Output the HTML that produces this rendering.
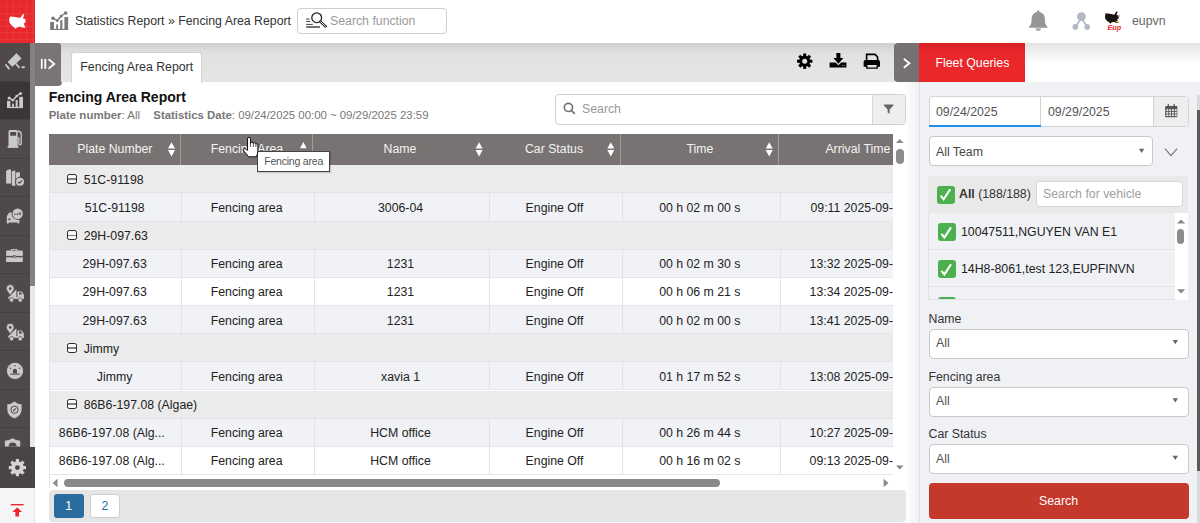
<!DOCTYPE html>
<html><head><meta charset="utf-8"><style>
*{box-sizing:border-box}
html,body{margin:0;padding:0;width:1200px;height:523px;overflow:hidden;background:#fff;font-family:"Liberation Sans",sans-serif;color:#333}
.a{position:absolute}
.t{position:absolute;white-space:nowrap}
#top{left:0;top:0;width:1200px;height:43px;background:#fff}
#logo{left:0;top:0;width:35px;height:43px;background:#e8282c}
#side{left:0;top:43px;width:35px;height:480px;background:#4f4a49}
.si{position:absolute;left:0;width:30px;border-bottom:1px solid #464140}
#collapse{left:35px;top:43px;width:26.5px;height:43.4px;background:#7a7574;border-radius:0 4px 4px 0}
#tabbar{left:61px;top:43px;width:834px;height:38.6px;background:linear-gradient(#cecece 0,#dcdcdc 7px,#e2e2e2 13px,#e5e5e5 100%)}
#tab{left:70.5px;top:51.5px;width:131px;height:31px;background:#fff;border:1px solid #d2d2d2;border-bottom:none;border-radius:3px 3px 0 0}
#rtog{left:894px;top:43px;width:25.3px;height:38.7px;background:#757170;border-radius:4px 0 0 4px}
#fq{left:919.3px;top:43px;width:105.7px;height:38.7px;background:linear-gradient(#d92227,#ea282b 35%)}
#rp{left:918.5px;top:81.7px;width:281.5px;height:441.3px;background:#f0f1f5;border-left:1px solid #dfe0e5}
#rpshadow{left:904px;top:81.7px;width:14.5px;height:441.3px;background:linear-gradient(90deg,rgba(0,0,30,0),rgba(0,0,30,.06))}
#topsh{left:1025px;top:43px;width:175px;height:20px;background:linear-gradient(#e3e3e3,rgba(255,255,255,0))}
.th{position:absolute;top:134px;height:31.3px;background:#787372}
.cell{position:absolute;height:28.15px;border-right:1px solid #e3e3e3;border-bottom:1px solid #e6e6e6}
.sel{position:absolute;left:928.5px;width:260px;height:30px;background:#fff;border:1px solid #c9c9c9;border-radius:4px}
</style></head><body>
<div class="a" id="top"></div>
<div class="a" id="topsh"></div>
<div class="a" id="logo"></div>
<div class="a" id="side"></div>
<div class="si" style="top:43.00px;height:38.5px;background:#4f4a49"></div>
<div class="si" style="top:81.50px;height:38.5px;background:#3b3635"></div>
<div class="si" style="top:120.00px;height:38.5px;background:#4f4a49"></div>
<div class="si" style="top:158.50px;height:38.5px;background:#4f4a49"></div>
<div class="si" style="top:197.00px;height:38.5px;background:#4f4a49"></div>
<div class="si" style="top:235.50px;height:38.5px;background:#4f4a49"></div>
<div class="si" style="top:274.00px;height:38.5px;background:#4f4a49"></div>
<div class="si" style="top:312.50px;height:38.5px;background:#4f4a49"></div>
<div class="si" style="top:351.00px;height:38.5px;background:#4f4a49"></div>
<div class="si" style="top:389.50px;height:38.5px;background:#4f4a49"></div>
<div class="si" style="top:428.00px;height:38.5px;background:#4f4a49"></div>
<div class="a" style="left:30px;top:43px;width:5px;height:404px;background:#e9e9e9"></div>
<div class="a" style="left:30px;top:43px;width:5px;height:242.5px;background:#858282"></div>
<div class="a" style="left:0;top:446.5px;width:35px;height:41.5px;background:#4a4544"></div>
<div class="a" style="left:0;top:488px;width:35px;height:35px;background:#f5f5f5;border-right:1px solid #e6e6e6"></div>
<div class="a" id="collapse"></div>
<div class="a" id="tabbar"></div>
<div class="a" id="tab"></div>
<div class="t" style="left:80.30px;top:59.97px;font-size:12.3px;line-height:14.145px;color:#333;font-weight:normal;">Fencing Area Report</div>
<div class="a" id="rpshadow"></div>
<div class="a" id="rp"></div>
<div class="a" id="rtog"></div>
<div class="a" id="fq"></div>
<div class="t" style="left:935.50px;top:56.07px;font-size:12.3px;line-height:14.145px;color:#fff;font-weight:normal;">Fleet Queries</div>
<div class="t" style="left:75.00px;top:13.97px;font-size:12.3px;line-height:14.145px;color:#333;font-weight:normal;">Statistics Report &raquo; Fencing Area Report</div>
<div class="a" style="left:297px;top:8px;width:150px;height:26px;border:1px solid #cfcfcf;border-radius:4px"></div>
<div class="t" style="left:330.00px;top:14.17px;font-size:12.3px;line-height:14.145px;color:#9a9a9a;font-weight:normal;">Search function</div>
<div class="t" style="left:1132.00px;top:14.47px;font-size:12.3px;line-height:14.145px;color:#666;font-weight:normal;">eupvn</div>
<div class="t" style="left:48.70px;top:88.50px;font-size:14.0px;line-height:16.1px;color:#111;font-weight:bold;">Fencing Area Report</div>
<div class="t" style="left:48.70px;top:108.60px;font-size:11.5px;line-height:13.225px;color:#777;font-weight:normal;"><b>Plate number</b>: All</div>
<div class="t" style="left:153.30px;top:108.69px;font-size:11.4px;line-height:13.11px;color:#777;font-weight:normal;"><b>Statistics Date</b>: 09/24/2025 00:00 ~ 09/29/2025 23:59</div>
<div class="a" style="left:555px;top:93.5px;width:351px;height:31px;border:1px solid #cfcfcf;border-radius:4px;background:#fff"></div>
<div class="a" style="left:871.5px;top:94.5px;width:33.5px;height:29px;background:#eeeeee;border-left:1px solid #d6d6d6;border-radius:0 3px 3px 0"></div>
<div class="t" style="left:582.00px;top:102.17px;font-size:12.3px;line-height:14.145px;color:#999;font-weight:normal;">Search</div>
<div class="a" style="left:48.6px;top:134px;width:844.4px;height:341px;overflow:hidden">
<div class="th" style="left:0.00px;width:132.00px;top:0"></div>
<div class="a" style="left:131.50px;width:1px;top:0;height:31.3px;background:#a19c9a"></div>
<div class="th" style="left:132.00px;width:132.10px;top:0"></div>
<div class="a" style="left:263.60px;width:1px;top:0;height:31.3px;background:#a19c9a"></div>
<div class="th" style="left:264.10px;width:175.70px;top:0"></div>
<div class="a" style="left:439.30px;width:1px;top:0;height:31.3px;background:#a19c9a"></div>
<div class="th" style="left:439.80px;width:132.30px;top:0"></div>
<div class="a" style="left:571.60px;width:1px;top:0;height:31.3px;background:#a19c9a"></div>
<div class="th" style="left:572.10px;width:158.30px;top:0"></div>
<div class="a" style="left:729.90px;width:1px;top:0;height:31.3px;background:#a19c9a"></div>
<div class="th" style="left:730.40px;width:161.00px;top:0"></div>
<div class="a" style="left:890.90px;width:1px;top:0;height:31.3px;background:#a19c9a"></div>
<div class="a" style="left:0;top:31.30px;width:900px;height:28.15px;background:#ebebeb;border-bottom:1px solid #e3e3e3"></div>
<div class="cell" style="left:0.00px;top:59.45px;width:133.90px;background:#f1f2f6"></div>
<div class="cell" style="left:133.90px;top:59.45px;width:132.10px;background:#f1f2f6"></div>
<div class="cell" style="left:266.00px;top:59.45px;width:175.70px;background:#f1f2f6"></div>
<div class="cell" style="left:441.70px;top:59.45px;width:132.30px;background:#f1f2f6"></div>
<div class="cell" style="left:574.00px;top:59.45px;width:158.30px;background:#f1f2f6"></div>
<div class="cell" style="left:732.30px;top:59.45px;width:161.00px;background:#f1f2f6"></div>
<div class="a" style="left:0;top:87.60px;width:900px;height:28.15px;background:#ebebeb;border-bottom:1px solid #e3e3e3"></div>
<div class="cell" style="left:0.00px;top:115.75px;width:133.90px;background:#f1f2f6"></div>
<div class="cell" style="left:133.90px;top:115.75px;width:132.10px;background:#f1f2f6"></div>
<div class="cell" style="left:266.00px;top:115.75px;width:175.70px;background:#f1f2f6"></div>
<div class="cell" style="left:441.70px;top:115.75px;width:132.30px;background:#f1f2f6"></div>
<div class="cell" style="left:574.00px;top:115.75px;width:158.30px;background:#f1f2f6"></div>
<div class="cell" style="left:732.30px;top:115.75px;width:161.00px;background:#f1f2f6"></div>
<div class="cell" style="left:0.00px;top:143.90px;width:133.90px;background:#ffffff"></div>
<div class="cell" style="left:133.90px;top:143.90px;width:132.10px;background:#ffffff"></div>
<div class="cell" style="left:266.00px;top:143.90px;width:175.70px;background:#ffffff"></div>
<div class="cell" style="left:441.70px;top:143.90px;width:132.30px;background:#ffffff"></div>
<div class="cell" style="left:574.00px;top:143.90px;width:158.30px;background:#ffffff"></div>
<div class="cell" style="left:732.30px;top:143.90px;width:161.00px;background:#ffffff"></div>
<div class="cell" style="left:0.00px;top:172.05px;width:133.90px;background:#f1f2f6"></div>
<div class="cell" style="left:133.90px;top:172.05px;width:132.10px;background:#f1f2f6"></div>
<div class="cell" style="left:266.00px;top:172.05px;width:175.70px;background:#f1f2f6"></div>
<div class="cell" style="left:441.70px;top:172.05px;width:132.30px;background:#f1f2f6"></div>
<div class="cell" style="left:574.00px;top:172.05px;width:158.30px;background:#f1f2f6"></div>
<div class="cell" style="left:732.30px;top:172.05px;width:161.00px;background:#f1f2f6"></div>
<div class="a" style="left:0;top:200.20px;width:900px;height:28.15px;background:#ebebeb;border-bottom:1px solid #e3e3e3"></div>
<div class="cell" style="left:0.00px;top:228.35px;width:133.90px;background:#f1f2f6"></div>
<div class="cell" style="left:133.90px;top:228.35px;width:132.10px;background:#f1f2f6"></div>
<div class="cell" style="left:266.00px;top:228.35px;width:175.70px;background:#f1f2f6"></div>
<div class="cell" style="left:441.70px;top:228.35px;width:132.30px;background:#f1f2f6"></div>
<div class="cell" style="left:574.00px;top:228.35px;width:158.30px;background:#f1f2f6"></div>
<div class="cell" style="left:732.30px;top:228.35px;width:161.00px;background:#f1f2f6"></div>
<div class="a" style="left:0;top:256.50px;width:900px;height:28.15px;background:#ebebeb;border-bottom:1px solid #e3e3e3"></div>
<div class="cell" style="left:0.00px;top:284.65px;width:133.90px;background:#f1f2f6"></div>
<div class="cell" style="left:133.90px;top:284.65px;width:132.10px;background:#f1f2f6"></div>
<div class="cell" style="left:266.00px;top:284.65px;width:175.70px;background:#f1f2f6"></div>
<div class="cell" style="left:441.70px;top:284.65px;width:132.30px;background:#f1f2f6"></div>
<div class="cell" style="left:574.00px;top:284.65px;width:158.30px;background:#f1f2f6"></div>
<div class="cell" style="left:732.30px;top:284.65px;width:161.00px;background:#f1f2f6"></div>
<div class="cell" style="left:0.00px;top:312.80px;width:133.90px;background:#ffffff"></div>
<div class="cell" style="left:133.90px;top:312.80px;width:132.10px;background:#ffffff"></div>
<div class="cell" style="left:266.00px;top:312.80px;width:175.70px;background:#ffffff"></div>
<div class="cell" style="left:441.70px;top:312.80px;width:132.30px;background:#ffffff"></div>
<div class="cell" style="left:574.00px;top:312.80px;width:158.30px;background:#ffffff"></div>
<div class="cell" style="left:732.30px;top:312.80px;width:161.00px;background:#ffffff"></div>
</div>
<div class="t" style="left:83.70px;top:172.67px;font-size:12.3px;line-height:14.145px;color:#222;font-weight:normal;">51C-91198</div>
<div class="a" style="left:67px;top:173.75px;width:10.25px;height:10.25px;border:1.2px solid #2a2a2a;border-radius:2.2px;background:#f7f7f7"></div>
<div class="a" style="left:68.2px;top:178.25px;width:7.85px;height:1.8px;background:#808080"></div>
<div class="t" style="left:48.60px;width:132.0px;text-align:center;top:200.92px;font-size:12.3px;line-height:14.145px;color:#222;font-weight:normal;">51C-91198</div>
<div class="t" style="left:180.60px;width:132.1px;text-align:center;top:200.92px;font-size:12.3px;line-height:14.145px;color:#222;font-weight:normal;">Fencing area</div>
<div class="t" style="left:312.70px;width:175.7px;text-align:center;top:200.92px;font-size:12.3px;line-height:14.145px;color:#222;font-weight:normal;">3006-04</div>
<div class="t" style="left:488.40px;width:132.30000000000007px;text-align:center;top:200.92px;font-size:12.3px;line-height:14.145px;color:#222;font-weight:normal;">Engine Off</div>
<div class="t" style="left:620.70px;width:158.29999999999995px;text-align:center;top:200.92px;font-size:12.3px;line-height:14.145px;color:#222;font-weight:normal;">00 h 02 m 00 s</div>
<div class="t" style="left:779px;width:114px;overflow:hidden;top:200.92px;font-size:12.3px;line-height:14.145px;color:#222;text-align:right">09:11 2025-09-</div>
<div class="t" style="left:83.70px;top:228.97px;font-size:12.3px;line-height:14.145px;color:#222;font-weight:normal;">29H-097.63</div>
<div class="a" style="left:67px;top:230.05px;width:10.25px;height:10.25px;border:1.2px solid #2a2a2a;border-radius:2.2px;background:#f7f7f7"></div>
<div class="a" style="left:68.2px;top:234.55px;width:7.85px;height:1.8px;background:#808080"></div>
<div class="t" style="left:48.60px;width:132.0px;text-align:center;top:257.22px;font-size:12.3px;line-height:14.145px;color:#222;font-weight:normal;">29H-097.63</div>
<div class="t" style="left:180.60px;width:132.1px;text-align:center;top:257.22px;font-size:12.3px;line-height:14.145px;color:#222;font-weight:normal;">Fencing area</div>
<div class="t" style="left:312.70px;width:175.7px;text-align:center;top:257.22px;font-size:12.3px;line-height:14.145px;color:#222;font-weight:normal;">1231</div>
<div class="t" style="left:488.40px;width:132.30000000000007px;text-align:center;top:257.22px;font-size:12.3px;line-height:14.145px;color:#222;font-weight:normal;">Engine Off</div>
<div class="t" style="left:620.70px;width:158.29999999999995px;text-align:center;top:257.22px;font-size:12.3px;line-height:14.145px;color:#222;font-weight:normal;">00 h 02 m 30 s</div>
<div class="t" style="left:779px;width:114px;overflow:hidden;top:257.22px;font-size:12.3px;line-height:14.145px;color:#222;text-align:right">13:32 2025-09-</div>
<div class="t" style="left:48.60px;width:132.0px;text-align:center;top:285.37px;font-size:12.3px;line-height:14.145px;color:#222;font-weight:normal;">29H-097.63</div>
<div class="t" style="left:180.60px;width:132.1px;text-align:center;top:285.37px;font-size:12.3px;line-height:14.145px;color:#222;font-weight:normal;">Fencing area</div>
<div class="t" style="left:312.70px;width:175.7px;text-align:center;top:285.37px;font-size:12.3px;line-height:14.145px;color:#222;font-weight:normal;">1231</div>
<div class="t" style="left:488.40px;width:132.30000000000007px;text-align:center;top:285.37px;font-size:12.3px;line-height:14.145px;color:#222;font-weight:normal;">Engine Off</div>
<div class="t" style="left:620.70px;width:158.29999999999995px;text-align:center;top:285.37px;font-size:12.3px;line-height:14.145px;color:#222;font-weight:normal;">00 h 06 m 21 s</div>
<div class="t" style="left:779px;width:114px;overflow:hidden;top:285.37px;font-size:12.3px;line-height:14.145px;color:#222;text-align:right">13:34 2025-09-</div>
<div class="t" style="left:48.60px;width:132.0px;text-align:center;top:313.52px;font-size:12.3px;line-height:14.145px;color:#222;font-weight:normal;">29H-097.63</div>
<div class="t" style="left:180.60px;width:132.1px;text-align:center;top:313.52px;font-size:12.3px;line-height:14.145px;color:#222;font-weight:normal;">Fencing area</div>
<div class="t" style="left:312.70px;width:175.7px;text-align:center;top:313.52px;font-size:12.3px;line-height:14.145px;color:#222;font-weight:normal;">1231</div>
<div class="t" style="left:488.40px;width:132.30000000000007px;text-align:center;top:313.52px;font-size:12.3px;line-height:14.145px;color:#222;font-weight:normal;">Engine Off</div>
<div class="t" style="left:620.70px;width:158.29999999999995px;text-align:center;top:313.52px;font-size:12.3px;line-height:14.145px;color:#222;font-weight:normal;">00 h 02 m 00 s</div>
<div class="t" style="left:779px;width:114px;overflow:hidden;top:313.52px;font-size:12.3px;line-height:14.145px;color:#222;text-align:right">13:41 2025-09-</div>
<div class="t" style="left:83.70px;top:341.57px;font-size:12.3px;line-height:14.145px;color:#222;font-weight:normal;">Jimmy</div>
<div class="a" style="left:67px;top:342.65px;width:10.25px;height:10.25px;border:1.2px solid #2a2a2a;border-radius:2.2px;background:#f7f7f7"></div>
<div class="a" style="left:68.2px;top:347.15px;width:7.85px;height:1.8px;background:#808080"></div>
<div class="t" style="left:48.60px;width:132.0px;text-align:center;top:369.82px;font-size:12.3px;line-height:14.145px;color:#222;font-weight:normal;">Jimmy</div>
<div class="t" style="left:180.60px;width:132.1px;text-align:center;top:369.82px;font-size:12.3px;line-height:14.145px;color:#222;font-weight:normal;">Fencing area</div>
<div class="t" style="left:312.70px;width:175.7px;text-align:center;top:369.82px;font-size:12.3px;line-height:14.145px;color:#222;font-weight:normal;">xavia 1</div>
<div class="t" style="left:488.40px;width:132.30000000000007px;text-align:center;top:369.82px;font-size:12.3px;line-height:14.145px;color:#222;font-weight:normal;">Engine Off</div>
<div class="t" style="left:620.70px;width:158.29999999999995px;text-align:center;top:369.82px;font-size:12.3px;line-height:14.145px;color:#222;font-weight:normal;">01 h 17 m 52 s</div>
<div class="t" style="left:779px;width:114px;overflow:hidden;top:369.82px;font-size:12.3px;line-height:14.145px;color:#222;text-align:right">13:08 2025-09-</div>
<div class="t" style="left:83.70px;top:397.87px;font-size:12.3px;line-height:14.145px;color:#222;font-weight:normal;">86B6-197.08 (Algae)</div>
<div class="a" style="left:67px;top:398.95px;width:10.25px;height:10.25px;border:1.2px solid #2a2a2a;border-radius:2.2px;background:#f7f7f7"></div>
<div class="a" style="left:68.2px;top:403.45px;width:7.85px;height:1.8px;background:#808080"></div>
<div class="t" style="left:58.80px;top:426.12px;font-size:12.3px;line-height:14.145px;color:#222;font-weight:normal;">86B6-197.08 (Alg...</div>
<div class="t" style="left:180.60px;width:132.1px;text-align:center;top:426.12px;font-size:12.3px;line-height:14.145px;color:#222;font-weight:normal;">Fencing area</div>
<div class="t" style="left:312.70px;width:175.7px;text-align:center;top:426.12px;font-size:12.3px;line-height:14.145px;color:#222;font-weight:normal;">HCM office</div>
<div class="t" style="left:488.40px;width:132.30000000000007px;text-align:center;top:426.12px;font-size:12.3px;line-height:14.145px;color:#222;font-weight:normal;">Engine Off</div>
<div class="t" style="left:620.70px;width:158.29999999999995px;text-align:center;top:426.12px;font-size:12.3px;line-height:14.145px;color:#222;font-weight:normal;">00 h 26 m 44 s</div>
<div class="t" style="left:779px;width:114px;overflow:hidden;top:426.12px;font-size:12.3px;line-height:14.145px;color:#222;text-align:right">10:27 2025-09-</div>
<div class="t" style="left:58.80px;top:454.27px;font-size:12.3px;line-height:14.145px;color:#222;font-weight:normal;">86B6-197.08 (Alg...</div>
<div class="t" style="left:180.60px;width:132.1px;text-align:center;top:454.27px;font-size:12.3px;line-height:14.145px;color:#222;font-weight:normal;">Fencing area</div>
<div class="t" style="left:312.70px;width:175.7px;text-align:center;top:454.27px;font-size:12.3px;line-height:14.145px;color:#222;font-weight:normal;">HCM office</div>
<div class="t" style="left:488.40px;width:132.30000000000007px;text-align:center;top:454.27px;font-size:12.3px;line-height:14.145px;color:#222;font-weight:normal;">Engine Off</div>
<div class="t" style="left:620.70px;width:158.29999999999995px;text-align:center;top:454.27px;font-size:12.3px;line-height:14.145px;color:#222;font-weight:normal;">00 h 16 m 02 s</div>
<div class="t" style="left:779px;width:114px;overflow:hidden;top:454.27px;font-size:12.3px;line-height:14.145px;color:#222;text-align:right">09:13 2025-09-</div>
<div class="t" style="left:48.85px;width:132.0px;text-align:center;top:142.17px;font-size:12.3px;line-height:14.145px;color:#f4f4f4;font-weight:normal;">Plate Number</div>
<div class="t" style="left:180.95px;width:132.1px;text-align:center;top:142.17px;font-size:12.3px;line-height:14.145px;color:#f4f4f4;font-weight:normal;">Fencing Area</div>
<div class="t" style="left:312.15px;width:175.7px;text-align:center;top:142.17px;font-size:12.3px;line-height:14.145px;color:#f4f4f4;font-weight:normal;">Name</div>
<div class="t" style="left:487.85px;width:132.30000000000007px;text-align:center;top:142.17px;font-size:12.3px;line-height:14.145px;color:#f4f4f4;font-weight:normal;">Car Status</div>
<div class="t" style="left:620.85px;width:158.29999999999995px;text-align:center;top:142.17px;font-size:12.3px;line-height:14.145px;color:#f4f4f4;font-weight:normal;">Time</div>
<div class="t" style="left:779px;width:111.3px;overflow:hidden;top:142.17px;font-size:12.3px;line-height:14.145px;color:#f4f4f4;text-align:right">Arrival Time</div>
<div class="a" style="left:893px;top:134px;width:14px;height:341px;background:#fff"></div>
<div class="a" style="left:895.5px;top:149px;width:8px;height:15px;background:#8c8c8c;border-radius:4px"></div>
<div class="a" style="left:48.6px;top:475px;width:858px;height:13.5px;background:#fff"></div>
<div class="a" style="left:63.8px;top:479px;width:656px;height:8px;background:#8a8a8a;border-radius:4px"></div>
<div class="a" style="left:48.6px;top:165.3px;width:1px;height:323px;background:#e4e4e4"></div>
<div class="a" style="left:48.8px;top:490px;width:857.6px;height:32px;background:#e5e5e5;border-radius:4px"></div>
<div class="a" style="left:53.5px;top:493.7px;width:30.2px;height:24.4px;background:#2a6c9e;border-radius:3px"></div>
<div class="a" style="left:89.5px;top:493.7px;width:30.7px;height:24.4px;background:#fff;border:1px solid #cfcfcf;border-radius:3px"></div>
<div class="t" style="left:53.60px;width:30px;text-align:center;top:498.67px;font-size:12.3px;line-height:14.145px;color:#fff;font-weight:normal;">1</div>
<div class="t" style="left:89.80px;width:30px;text-align:center;top:498.67px;font-size:12.3px;line-height:14.145px;color:#2a6c9e;font-weight:normal;">2</div>
<div class="a" style="left:928.5px;top:96.2px;width:260px;height:31px;border:1px solid #d3d3d3;border-radius:4px;background:#fff"></div>
<div class="a" style="left:1153px;top:97.2px;width:34.5px;height:29px;background:#eeeeee;border-left:1px solid #d3d3d3;border-radius:0 3px 3px 0"></div>
<div class="a" style="left:1040.4px;top:97.2px;width:1px;height:29px;background:#d3d3d3"></div>
<div class="a" style="left:929px;top:125px;width:111.5px;height:2.3px;background:#1e90e8"></div>
<div class="t" style="left:936.00px;top:104.67px;font-size:12.3px;line-height:14.145px;color:#555;font-weight:normal;">09/24/2025</div>
<div class="t" style="left:1048.00px;top:104.67px;font-size:12.3px;line-height:14.145px;color:#555;font-weight:normal;">09/29/2025</div>
<div class="sel" style="top:136px;width:224.7px"></div>
<div class="t" style="left:936.00px;top:144.67px;font-size:12.3px;line-height:14.145px;color:#444;font-weight:normal;">All Team</div>
<div class="a" style="left:928.4px;top:176px;width:260px;height:124.3px;background:#f0f1f5;border:1px solid #e3e3e3"></div>
<div class="a" style="left:928.4px;top:176px;width:260px;height:36.8px;background:#e9e9e9"></div>
<div class="a" style="left:1036.2px;top:181.2px;width:147.2px;height:25.8px;background:#fff;border:1px solid #d6d6d6;border-radius:4px"></div>
<div class="t" style="left:1043.00px;top:187.17px;font-size:12.3px;line-height:14.145px;color:#a0a0a0;font-weight:normal;">Search for vehicle</div>
<div class="a" style="left:937px;top:185.5px;width:18px;height:18px;background:#4cb050;border-radius:3px"></div>
<div class="t" style="left:959px;top:186px;font-size:12.3px;line-height:16px;color:#333"><b>All</b> (188/188)</div>
<div class="a" style="left:929.4px;top:212.8px;width:245.2px;height:86.5px;overflow:hidden">
<div class="a" style="left:0;top:0.00px;width:245.2px;height:36.9px;border-bottom:1px solid #e2e2e2"></div>
<div class="a" style="left:8.6px;top:10.70px;width:18px;height:18px;background:#4cb050;border-radius:3px"></div>
<div class="a" style="left:0;top:36.90px;width:245.2px;height:36.9px;border-bottom:1px solid #e2e2e2"></div>
<div class="a" style="left:8.6px;top:47.60px;width:18px;height:18px;background:#4cb050;border-radius:3px"></div>
<div class="a" style="left:0;top:73.60px;width:245.2px;height:36.9px;border-bottom:1px solid #e2e2e2"></div>
<div class="a" style="left:8.6px;top:84.30px;width:18px;height:18px;background:#4cb050;border-radius:3px"></div>
</div>
<div class="t" style="left:961.00px;top:224.97px;font-size:12.3px;line-height:14.145px;color:#222;font-weight:normal;">10047511,NGUYEN VAN E1</div>
<div class="t" style="left:961.00px;top:261.87px;font-size:12.3px;line-height:14.145px;color:#222;font-weight:normal;">14H8-8061,test 123,EUPFINVN</div>
<div class="a" style="left:1174.6px;top:213px;width:13.4px;height:86.5px;background:#fff"></div>
<div class="a" style="left:1176.5px;top:229.4px;width:7px;height:14.2px;background:#8c8c8c;border-radius:3.5px"></div>
<div class="t" style="left:928.50px;top:311.57px;font-size:12.3px;line-height:14.145px;color:#333;font-weight:normal;">Name</div>
<div class="sel" style="top:328.5px"></div>
<div class="t" style="left:936.00px;top:336.17px;font-size:12.3px;line-height:14.145px;color:#555;font-weight:normal;">All</div>
<div class="t" style="left:928.50px;top:369.77px;font-size:12.3px;line-height:14.145px;color:#333;font-weight:normal;">Fencing area</div>
<div class="sel" style="top:386.7px"></div>
<div class="t" style="left:936.00px;top:394.37px;font-size:12.3px;line-height:14.145px;color:#555;font-weight:normal;">All</div>
<div class="t" style="left:928.50px;top:427.27px;font-size:12.3px;line-height:14.145px;color:#333;font-weight:normal;">Car Status</div>
<div class="sel" style="top:444.2px"></div>
<div class="t" style="left:936.00px;top:451.87px;font-size:12.3px;line-height:14.145px;color:#555;font-weight:normal;">All</div>
<div class="a" style="left:928.5px;top:483.4px;width:260px;height:35.2px;background:#c4392b;border-radius:4px"></div>
<div class="t" style="left:958.50px;width:200px;text-align:center;top:494.17px;font-size:12.3px;line-height:14.145px;color:#fff;font-weight:normal;">Search</div>
<div class="a" style="left:1196.8px;top:95px;width:3.2px;height:428px;background:#dadada"></div>
<div class="a" style="left:1196.8px;top:109.8px;width:3.2px;height:361.5px;background:#5a5a5a"></div>
<div class="a" style="left:257px;top:150.75px;width:73.4px;height:20.85px;background:#fff;border:1px solid #444;box-shadow:1px 1px 1px rgba(0,0,0,.15)"></div>
<div class="t" style="left:264.20px;top:155.23px;font-size:10.6px;line-height:12.19px;color:#555;font-weight:normal;letter-spacing:-0.25px">Fencing area</div>
<svg class="a" style="left:0;top:0" width="1200" height="523" viewBox="0 0 1200 523"><path fill="#fff" d="M9.3,19 L10.1,16.4 L13,16.8 L16.5,17.3 L20.2,18.1 L22.4,14.8 L23.5,13.9 L24.3,14.5 L23,18.5 L25.2,19 L25.6,22.5 L23.8,23.5 L25.4,27.8 L22,27.6 L20,26.6 L17,27.5 L15.2,28.8 L14.4,27.4 L11.8,25.5 L9.4,22.6 Z"/>
<rect x="6.5" y="0" width="0.6" height="43" fill="#fff" opacity="0.12"/>
<rect x="13" y="0" width="0.6" height="43" fill="#fff" opacity="0.12"/>
<rect x="19.5" y="0" width="0.6" height="43" fill="#fff" opacity="0.12"/>
<rect x="26" y="0" width="0.6" height="43" fill="#fff" opacity="0.12"/>
<rect x="32.5" y="0" width="0.6" height="43" fill="#fff" opacity="0.12"/>
<rect x="0" y="6.5" width="35" height="0.6" fill="#fff" opacity="0.12"/>
<rect x="0" y="13" width="35" height="0.6" fill="#fff" opacity="0.12"/>
<rect x="0" y="19.5" width="35" height="0.6" fill="#fff" opacity="0.12"/>
<rect x="0" y="26" width="35" height="0.6" fill="#fff" opacity="0.12"/>
<rect x="0" y="32.5" width="35" height="0.6" fill="#fff" opacity="0.12"/>
<rect x="0" y="39" width="35" height="0.6" fill="#fff" opacity="0.12"/>
<path fill="#c9c9c9" d="M16.5,53.6 L21.1,58.4 L12.3,66.4 L8.05,62 Z" stroke="#c9c9c9" stroke-width="0.8" stroke-linejoin="round"/>
<line x1="6" y1="65" x2="9" y2="68.6" stroke="#c9c9c9" stroke-width="1.9" stroke-linecap="round"/>
<line x1="16.2" y1="64" x2="19" y2="67.4" stroke="#c9c9c9" stroke-width="1.7" stroke-linecap="round"/>
<rect x="21.5" y="66.3" width="3.4" height="1.9" rx="0.9" fill="#c9c9c9"/>
<g fill="#c9c9c9"><rect x="7" y="106.9" width="16" height="1.2"/><rect x="7" y="100.8" width="3.4" height="7"/><rect x="12" y="103.6" width="1.9" height="4"/><rect x="15.6" y="100" width="2.1" height="7"/><rect x="19.2" y="96.8" width="3.8" height="10.5"/></g>
<polyline points="9.1,97.9 12.9,100.2 16.7,96 20.5,93.5" fill="none" stroke="#3b3635" stroke-width="3.2" stroke-linejoin="round"/>
<polyline points="9.1,97.9 12.9,100.2 16.7,96 20.5,93.5" fill="none" stroke="#c9c9c9" stroke-width="1.4" stroke-linejoin="round"/>
<g fill="#c9c9c9"><circle cx="9.1" cy="97.9" r="1.5"/><circle cx="12.9" cy="100.2" r="1.3"/><circle cx="16.7" cy="96" r="1.3"/><circle cx="20.5" cy="93.5" r="1.6"/></g>
<path fill="#c9c9c9" d="M8.5,146.2 L8.5,131.5 Q8.5,130 10,130 L16.2,130 Q17.7,130 17.7,131.5 L17.7,146.2 Z M10.2,132 L10.2,135.7 L16.2,135.7 L16.2,132 Z" fill-rule="evenodd"/>
<rect x="7.7" y="145.9" width="10.7" height="2" fill="#c9c9c9"/>
<path fill="none" stroke="#c9c9c9" stroke-width="1.3" d="M17.7,131 Q21.2,131.5 21.2,134.5 L21.2,143.6 Q21.2,144.8 20,144.8 Q18.9,144.8 18.9,143.6 L18.9,138.2 L17.7,138.2"/>
<g fill="#c9c9c9"><path d="M6.1,171 Q7.5,169.3 10.6,169.3 L11.1,170.2 L11.1,183.4 L6.1,183.4 Z"/><path d="M11.8,183.8 L11.8,171.8 Q13,170.6 15,170.6 L15.4,171.5 L15.4,185.8 L12,185.8 Z"/><path d="M16,186.2 L16,173 Q17.2,171.9 19.4,171.9 L19.9,172.8 L19.9,177 L19,177.6 L16.2,186.2 Z"/></g>
<circle cx="20" cy="181.7" r="4.9" fill="#4f4a49"/><circle cx="20" cy="181.7" r="4" fill="#c9c9c9"/><polyline points="17.9,181.8 19.5,183.2 22.1,180.3" fill="none" stroke="#4f4a49" stroke-width="1.1"/>
<path fill="#c9c9c9" d="M6.8,223.6 L6.8,216.5 Q6.8,215.5 7.6,215 L9.2,212.6 L13,212.6 L15,216 L19.3,216.5 L19.3,223.6 L17.6,223.6 L17.6,222.4 L8.6,222.4 L8.6,223.6 Z"/>
<circle cx="9.4" cy="219.3" r="1.1" fill="#4f4a49"/>
<circle cx="17.6" cy="213.8" r="6.1" fill="#4f4a49"/><circle cx="17.6" cy="213.8" r="5.2" fill="#c9c9c9"/>
<g fill="#4f4a49"><rect x="14.2" y="213.7" width="1.4" height="1.2"/><rect x="16.8" y="213.1" width="1.3" height="2"/><rect x="19.2" y="212.3" width="1.5" height="2.8"/></g>
<path fill="#c9c9c9" d="M6.1,251.6 Q6.1,250.6 7.1,250.6 L11,250.6 L11,249.6 Q11,249 11.6,249 L16.9,249 Q17.5,249 17.5,249.6 L17.5,250.6 L21.8,250.6 Q22.8,250.6 22.8,251.6 L22.8,261.9 L6.1,261.9 Z"/>
<rect x="12" y="249.9" width="4.5" height="0.7" fill="#4f4a49"/>
<rect x="6.1" y="255.9" width="16.7" height="1.4" fill="#4f4a49"/>
<rect x="13.5" y="255.4" width="1.9" height="2.4" fill="#c9c9c9" stroke="#4f4a49" stroke-width="0.5"/>
<g transform="translate(0,0)">
<path fill="#c9c9c9" d="M8,297.8 L16.4,289.4 L16.4,297.8 Z"/>
<path fill="#c9c9c9" d="M17.4,299 L17.4,291.6 L21.6,291.6 L23.8,294.5 L23.8,299 Z"/>
<path fill="#4f4a49" d="M19,292.5 L21,292.5 L22.2,294.6 L19,294.6 Z"/>
<rect x="8.4" y="297.2" width="15.4" height="1.8" fill="#c9c9c9"/>
<circle cx="11.6" cy="299.9" r="2.2" fill="#c9c9c9" stroke="#4f4a49" stroke-width="0.7"/><circle cx="20.2" cy="299.9" r="2.2" fill="#c9c9c9" stroke="#4f4a49" stroke-width="0.7"/>
<path fill="#c9c9c9" stroke="#4f4a49" stroke-width="0.8" d="M10.2,295.3 L7.3,291.2 Q6.2,289.7 6.2,288.5 A3.9,3.9 0 0 1 14.2,288.5 Q14.2,289.7 13.1,291.2 Z"/>
<circle cx="10.2" cy="288.6" r="1.3" fill="#4f4a49"/>
</g>
<g transform="translate(0,38.8)">
<path fill="#c9c9c9" d="M8,297.8 L16.4,289.4 L16.4,297.8 Z"/>
<path fill="#c9c9c9" d="M17.4,299 L17.4,291.6 L21.6,291.6 L23.8,294.5 L23.8,299 Z"/>
<path fill="#4f4a49" d="M19,292.5 L21,292.5 L22.2,294.6 L19,294.6 Z"/>
<rect x="8.4" y="297.2" width="15.4" height="1.8" fill="#c9c9c9"/>
<circle cx="11.6" cy="299.9" r="2.2" fill="#c9c9c9" stroke="#4f4a49" stroke-width="0.7"/><circle cx="20.2" cy="299.9" r="2.2" fill="#c9c9c9" stroke="#4f4a49" stroke-width="0.7"/>
<path fill="#c9c9c9" stroke="#4f4a49" stroke-width="0.8" d="M10.2,295.3 L7.3,291.2 Q6.2,289.7 6.2,288.5 A3.9,3.9 0 0 1 14.2,288.5 Q14.2,289.7 13.1,291.2 Z"/>
<circle cx="10.2" cy="288.6" r="1.3" fill="#4f4a49"/>
</g>
<circle cx="15" cy="370.9" r="8.1" fill="#c9c9c9"/>
<path fill="#4f4a49" d="M12.9,373.6 L12.9,370.7 Q12.9,368.7 14.95,368.7 Q17,368.7 17,370.7 L17,373.6 Z"/>
<rect x="10.2" y="373.7" width="9.8" height="1" fill="#4f4a49"/>
<g fill="#4f4a49"><circle cx="10.4" cy="368.2" r="0.75"/><circle cx="19.5" cy="368.2" r="0.75"/><circle cx="14.95" cy="365.8" r="0.75"/></g>
<path fill="#c9c9c9" d="M14.4,401.5 Q17.5,404.2 21.6,404.3 L21.6,409.5 Q21.6,415.5 14.4,418.5 Q7.3,415.5 7.3,409.5 L7.3,404.3 Q11.3,404.2 14.4,401.5 Z"/>
<circle cx="14.5" cy="409.7" r="3.6" fill="none" stroke="#4f4a49" stroke-width="1"/>
<line x1="13.2" y1="411" x2="15.8" y2="408.4" stroke="#4f4a49" stroke-width="1.1"/>
<path fill="#c9c9c9" d="M12.6,438.3 Q16,440.6 20.2,440.7 L20.2,446.5 L4.9,446.5 L4.9,440.7 Q9.2,440.6 12.6,438.3 Z"/>
<path fill="#4f4a49" d="M8.6,446.5 A4,4 0 0 1 16.6,446.5 Z"/>
<g fill="#d4d4d4">
<rect x="15.80" y="459.00" width="3.2" height="4" transform="rotate(0 17.4 467.6)"/>
<rect x="15.80" y="459.00" width="3.2" height="4" transform="rotate(45 17.4 467.6)"/>
<rect x="15.80" y="459.00" width="3.2" height="4" transform="rotate(90 17.4 467.6)"/>
<rect x="15.80" y="459.00" width="3.2" height="4" transform="rotate(135 17.4 467.6)"/>
<rect x="15.80" y="459.00" width="3.2" height="4" transform="rotate(180 17.4 467.6)"/>
<rect x="15.80" y="459.00" width="3.2" height="4" transform="rotate(225 17.4 467.6)"/>
<rect x="15.80" y="459.00" width="3.2" height="4" transform="rotate(270 17.4 467.6)"/>
<rect x="15.80" y="459.00" width="3.2" height="4" transform="rotate(315 17.4 467.6)"/>
<circle cx="17.4" cy="467.6" r="6.4"/></g>
<circle cx="17.4" cy="467.6" r="2.4" fill="#4a4544"/>
<rect x="10.8" y="504" width="12.8" height="1.4" fill="#e8262b"/>
<path fill="#e8262b" d="M17.2,507.4 L22,512 L19,512 L19,516.5 L15.4,516.5 L15.4,512 L12.4,512 Z"/>
<g fill="#fff"><rect x="40.9" y="58.9" width="1.7" height="9.9"/><rect x="44.4" y="58.9" width="1.8" height="9.9"/></g>
<polyline points="48.6,59.2 54.2,63.9 48.6,68.6" fill="none" stroke="#fff" stroke-width="1.8"/>
<g fill="#7a7a7a"><rect x="50.2" y="28.9" width="17.9" height="1.1"/><rect x="50.2" y="21.9" width="3.8" height="8"/><rect x="56.2" y="24.4" width="1.8" height="5.5"/><rect x="60.2" y="20.2" width="2.2" height="9.7"/><rect x="64.4" y="17" width="3.7" height="12.9"/></g>
<polyline points="53,18.2 57.2,20.7 61.2,16 65.7,13" fill="none" stroke="#fff" stroke-width="3.4" stroke-linejoin="round"/>
<polyline points="53,18.2 57.2,20.7 61.2,16 65.7,13" fill="none" stroke="#7a7a7a" stroke-width="1.5" stroke-linejoin="round"/>
<g fill="#7a7a7a"><circle cx="53" cy="18.2" r="1.8"/><circle cx="57.2" cy="20.7" r="1.4"/><circle cx="61.2" cy="16" r="1.5"/><circle cx="65.7" cy="13" r="1.8"/></g>
<g fill="#555"><rect x="306.2" y="18.4" width="3.3" height="1.2"/><rect x="306.2" y="20.9" width="4.1" height="1.1"/><rect x="306.2" y="23.9" width="6.6" height="1.1"/><rect x="306.2" y="26.2" width="13.8" height="1.6"/></g>
<circle cx="316.7" cy="17.7" r="4.9" fill="#fff" stroke="#222" stroke-width="1.3"/>
<line x1="320.4" y1="21.6" x2="325.6" y2="26.4" stroke="#222" stroke-width="2.6" stroke-linecap="round"/>
<line x1="320.6" y1="21.8" x2="325.4" y2="26.2" stroke="#fff" stroke-width="0.9" stroke-linecap="round"/>
<path fill="#969696" d="M1038.25,10 Q1039.2,10 1039.4,12 Q1044.3,13 1044.8,18 L1045.2,23 Q1045.6,25.3 1047.9,27.8 L1028.4,27.8 Q1030.9,25.3 1031.3,23 L1031.7,18 Q1032.2,13 1037.1,12 Q1037.3,10 1038.25,10 Z"/>
<path fill="#aaa" d="M1035.6,28.3 A2.65,2.65 0 0 0 1040.9,28.3 Z"/>
<g fill="#b1b7c5" stroke="#b1b7c5"><circle cx="1081.4" cy="16.6" r="4.4" stroke="none"/><circle cx="1075.4" cy="26.9" r="2.8" stroke="none"/><circle cx="1087.2" cy="26.9" r="2.8" stroke="none"/><line x1="1081.4" y1="18" x2="1075.6" y2="26.5" stroke-width="1.6"/><line x1="1081.4" y1="18" x2="1087" y2="26.5" stroke-width="1.6"/></g>
<g transform="translate(1105.2,10.9) scale(0.84) translate(-9.5,-13.6)"><path fill="#1a1414" d="M9.3,19 L10.1,16.4 L13,16.8 L16.5,17.3 L20.2,18.1 L22.4,14.8 L23.5,13.9 L24.3,14.5 L23,18.5 L25.2,19 L25.6,22.5 L23.8,23.5 L25.4,27.8 L22,27.6 L20,26.6 L17,27.5 L15.2,28.8 L14.4,27.4 L11.8,25.5 L9.4,22.6 Z"/></g>
<path fill="#f2c000" d="M1115.3,21.8 L1117.6,20.3 L1118.5,22.6 Z"/>
<path fill="#e8262b" d="M1118.6,14.8 L1119.3,14.6 L1119.4,17.3 Z"/>
<text x="1107.5" y="30" font-family="Liberation Sans" font-size="7.2" font-weight="bold" fill="#e8262b" font-style="italic">Eup</text>
<g fill="#000">
<rect x="803.20" y="53.50" width="3" height="3.5" transform="rotate(0 804.7 61.2)"/>
<rect x="803.20" y="53.50" width="3" height="3.5" transform="rotate(45 804.7 61.2)"/>
<rect x="803.20" y="53.50" width="3" height="3.5" transform="rotate(90 804.7 61.2)"/>
<rect x="803.20" y="53.50" width="3" height="3.5" transform="rotate(135 804.7 61.2)"/>
<rect x="803.20" y="53.50" width="3" height="3.5" transform="rotate(180 804.7 61.2)"/>
<rect x="803.20" y="53.50" width="3" height="3.5" transform="rotate(225 804.7 61.2)"/>
<rect x="803.20" y="53.50" width="3" height="3.5" transform="rotate(270 804.7 61.2)"/>
<rect x="803.20" y="53.50" width="3" height="3.5" transform="rotate(315 804.7 61.2)"/>
<circle cx="804.7" cy="61.2" r="5.6"/></g>
<circle cx="804.7" cy="61.2" r="2.5" fill="#e3e3e3"/>
<path fill="#000" d="M836.4,53 L840.4,53 L840.4,58 L843.4,58 L838.4,63.8 L833.4,58 L836.4,58 Z"/>
<path fill="#000" d="M829.6,62.6 L835.6,62.6 L838.4,65.3 L841.2,62.6 L846.4,62.6 L846.4,67.6 L829.6,67.6 Z"/>
<g fill="#888"><rect x="841.7" y="65" width="1.2" height="1"/><rect x="843.8" y="65" width="1.2" height="1"/></g>
<path fill="none" stroke="#000" stroke-width="1.6" d="M866.6,60.5 L866.6,54.4 L875,54.4 L877.6,57 L877.6,60.5"/>
<path fill="#000" d="M863.6,61.8 Q863.6,60 865.4,60 L878.2,60 Q880,60 880,61.8 L880,66.8 L877.6,66.8 L877.6,65 L866.4,65 L866.4,66.8 L863.6,66.8 Z"/>
<path fill="none" stroke="#000" stroke-width="1.4" d="M866.8,64.5 L866.8,68.1 L877.2,68.1 L877.2,64.5"/>
<polyline points="903.8,58.8 909.4,63.3 903.8,67.8" fill="none" stroke="#fff" stroke-width="1.8"/>
<circle cx="568.4" cy="107.4" r="4.1" fill="none" stroke="#777" stroke-width="1.7"/>
<line x1="571.4" y1="110.4" x2="574.3" y2="113.3" stroke="#777" stroke-width="1.9" stroke-linecap="round"/>
<path fill="#666" d="M883.9,104.5 L893.4,104.5 L893.4,105.6 L889.6,109.4 L889.6,113.8 L887.6,112.4 L887.6,109.4 L883.9,105.6 Z"/>
<path fill="#fff" d="M168,148.5 L171.5,142.2 L175,148.5 Z M168,150 L175,150 L171.5,156.5 Z"/>
<path fill="#fff" d="M475.6,148.5 L479.1,142.2 L482.6,148.5 Z M475.6,150 L482.6,150 L479.1,156.5 Z"/>
<path fill="#fff" d="M607.3,148.5 L610.8,142.2 L614.3,148.5 Z M607.3,150 L614.3,150 L610.8,156.5 Z"/>
<path fill="#fff" d="M765.7,148.5 L769.2,142.2 L772.7,148.5 Z M765.7,150 L772.7,150 L769.2,156.5 Z"/>
<path fill="#fff" d="M300,148.25 L303.35,142 L306.7,148.25 Z"/>
<path fill="#888" d="M895.9,142.9 L899.75,139 L903.6,142.9 Z"/>
<path fill="#888" d="M895.9,465.5 L903.6,465.5 L899.75,469.4 Z"/>
<path fill="#8a8a8a" d="M57.5,478.8 L57.5,487.2 L52.6,483 Z"/>
<path fill="#8a8a8a" d="M883.6,478.8 L883.6,487.2 L888.5,483 Z"/>
<g fill="#555"><rect x="1165.2" y="106" width="12.1" height="11.2" rx="0.6"/></g>
<g fill="#eee">
<rect x="1166.40" y="109.20" width="1.9" height="1.7"/>
<rect x="1166.40" y="111.80" width="1.9" height="1.7"/>
<rect x="1166.40" y="114.40" width="1.9" height="1.7"/>
<rect x="1169.20" y="109.20" width="1.9" height="1.7"/>
<rect x="1169.20" y="111.80" width="1.9" height="1.7"/>
<rect x="1169.20" y="114.40" width="1.9" height="1.7"/>
<rect x="1172.00" y="109.20" width="1.9" height="1.7"/>
<rect x="1172.00" y="111.80" width="1.9" height="1.7"/>
<rect x="1172.00" y="114.40" width="1.9" height="1.7"/>
<rect x="1174.80" y="109.20" width="1.9" height="1.7"/>
<rect x="1174.80" y="111.80" width="1.9" height="1.7"/>
<rect x="1174.80" y="114.40" width="1.9" height="1.7"/>
</g>
<g fill="#555"><rect x="1167.6" y="104.3" width="1.5" height="2.6"/><rect x="1173.4" y="104.3" width="1.5" height="2.6"/></g>
<path fill="#666" d="M1138.9,148.8 L1144.3000000000002,148.8 L1141.6000000000001,153.10000000000002 Z"/>
<path fill="#666" d="M1172.6,340 L1178.0,340 L1175.3,344.3 Z"/>
<path fill="#666" d="M1172.6,398.2 L1178.0,398.2 L1175.3,402.5 Z"/>
<path fill="#666" d="M1172.6,455.7 L1178.0,455.7 L1175.3,460.0 Z"/>
<polyline points="1164.9,148.6 1171,155.6 1177.1,148.6" fill="none" stroke="#777" stroke-width="1.2"/>
<polyline points="940.6,195.70000000000002 943.6,199.3 950.2,189.20000000000002" fill="none" stroke="#fff" stroke-width="2.1"/>
<polyline points="941.4,233.9 944.4,237.5 951,227.4" fill="none" stroke="#fff" stroke-width="2.1"/>
<polyline points="941.4,270.79999999999995 944.4,274.4 951,264.29999999999995" fill="none" stroke="#fff" stroke-width="2.1"/>
<path fill="#888" d="M1177,223.4 L1181.1,219.5 L1185.2,223.4 Z"/>
<path fill="#888" d="M1177,289.2 L1185.2,289.2 L1181.1,293.5 Z"/><path fill="#fff" stroke="#111" stroke-width="1" stroke-linejoin="round" d="M247.5,139 Q247.5,137.2 249,137.2 Q250.5,137.2 250.5,139 L250.5,143.6 Q250.5,142 252,142 Q253.3,142 253.3,143.6 L253.3,144 Q253.3,142.6 254.6,142.6 Q255.9,142.6 255.9,144.2 Q256,143.6 256.9,143.6 Q257.9,143.6 257.9,145.2 L257.9,151 Q257.9,154 256.2,156.8 L248.6,156.8 Q246.8,154.2 243.8,151 Q242.6,149.6 243.8,148.8 Q245.2,148.2 247.5,150.4 Z"/><g stroke="#111" stroke-width="0.7"><line x1="250.5" y1="143.6" x2="250.5" y2="147"/><line x1="253.3" y1="144" x2="253.3" y2="147"/><line x1="255.9" y1="144.2" x2="255.9" y2="147"/></g></svg>
</body></html>
